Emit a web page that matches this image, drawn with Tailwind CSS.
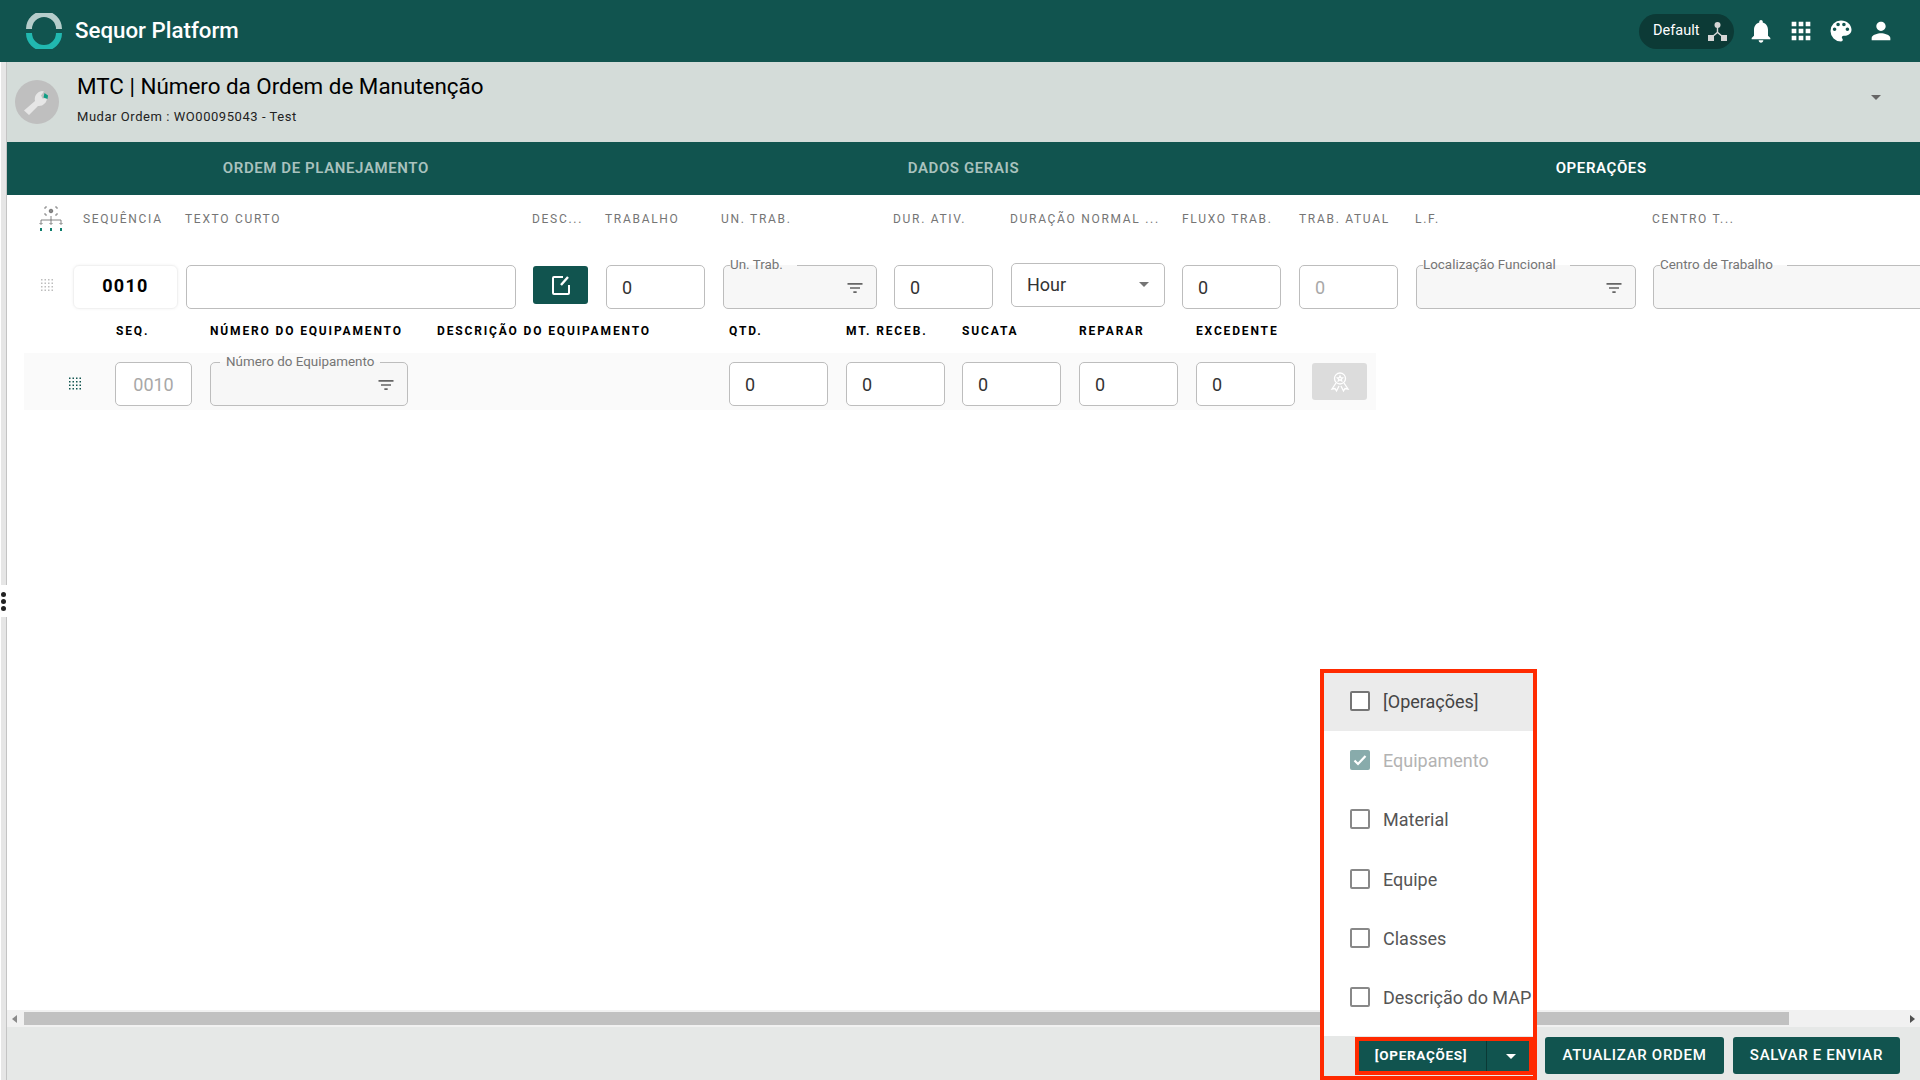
<!DOCTYPE html>
<html lang="pt">
<head>
  <meta charset="UTF-8" />
  <title>Sequor Platform</title>
  <script src="https://cdn.jsdelivr.net/npm/@tailwindcss/browser@4"></script>
</head>
<body class="bg-white text-[#333] font-[family-name:Roboto,sans-serif]">
<div class="relative w-[1920px] h-[1080px] overflow-hidden flex flex-col">

  <!-- Top bar -->
  <header class="h-[62px] shrink-0 bg-[#11544f] flex items-center text-white">
    <svg class="ml-[26px] w-[36px] h-[36px]" viewBox="0 0 36 36" fill="none" stroke-width="6">
      <path d="M3 16 A15 15 0 0 1 33 16" stroke="#b5cdcb" />
      <path d="M3 20 A15 15 0 0 0 33 20" stroke="#21b8b0" />
    </svg>
    <span class="ml-[13px] text-[22.300px] font-medium">Sequor Platform</span>
    <div class="ml-auto flex items-center w-[95px] h-[35px] rounded-full bg-[#0c3a36] pl-[14px]">
      <span class="text-[14.500px]">Default</span>
      <svg class="ml-[9px] w-[19px] h-[19px] text-[#d5d5d5]" viewBox="0 0 19 19" fill="currentColor">
        <circle cx="9.500" cy="3" r="3" />
        <path d="M8.800 5h1.400v5l3.500 3-1 1-3.200-2.700L6.300 14l-1-1 3.500-3z" />
        <rect x="0" y="13" width="6" height="6" />
        <rect x="13" y="13" width="6" height="6" />
      </svg>
    </div>
    <div class="ml-[13px] mr-[25px] flex items-center gap-[12px]">
      <svg class="w-[28px] h-[28px]" viewBox="0 0 24 24" fill="currentColor"><path d="M12 22c1.100 0 2-.9 2-2h-4c0 1.100.89 2 2 2zm6-6v-5c0-3.070-1.640-5.640-4.500-6.320V4c0-.83-.67-1.500-1.500-1.500s-1.500.67-1.500 1.500v.68C7.630 5.360 6 7.920 6 11v5l-2 2v1h16v-1l-2-2z"/></svg>
      <svg class="w-[28px] h-[28px]" viewBox="0 0 24 24" fill="currentColor"><path d="M4 8h4V4H4v4zm6 12h4v-4h-4v4zm-6 0h4v-4H4v4zm0-6h4v-4H4v4zm6 0h4v-4h-4v4zm6-10v4h4V4h-4zm-6 4h4V4h-4v4zm6 6h4v-4h-4v4zm0 6h4v-4h-4v4z"/></svg>
      <svg class="w-[28px] h-[28px]" viewBox="0 0 24 24" fill="currentColor"><path d="M12 3a9 9 0 0 0 0 18c.83 0 1.500-.67 1.500-1.500 0-.39-.15-.74-.39-1.010-.23-.26-.38-.61-.38-.99 0-.83.67-1.500 1.500-1.500H16c2.760 0 5-2.240 5-5 0-4.420-4.030-8-9-8zm-5.500 9c-.83 0-1.500-.67-1.500-1.500S5.670 9 6.500 9 8 9.670 8 10.500 7.330 12 6.500 12zm3-4C8.670 8 8 7.330 8 6.500S8.670 5 9.500 5s1.500.67 1.500 1.500S10.330 8 9.500 8zm5 0c-.83 0-1.500-.67-1.500-1.500S13.670 5 14.500 5s1.500.67 1.500 1.500S15.330 8 14.500 8zm3 4c-.83 0-1.500-.67-1.500-1.500S16.670 9 17.500 9s1.500.67 1.500 1.500-.67 1.500-1.500 1.500z"/></svg>
      <svg class="w-[28px] h-[28px]" viewBox="0 0 24 24" fill="currentColor"><path d="M12 12c2.210 0 4-1.790 4-4s-1.790-4-4-4-4 1.790-4 4 1.790 4 4 4zm0 2c-2.670 0-8 1.340-8 4v2h16v-2c0-2.660-5.330-4-8-4z"/></svg>
    </div>
  </header>

  <div class="flex-1 flex min-h-0">
    <!-- Left rail -->
    <div class="relative w-[7px] shrink-0 bg-[#e6e6e6] border-l border-l-white border-r border-r-[#c4c4c4]">
      <div class="absolute left-[-1px] top-[523px] w-[7px] h-[32px] bg-white flex flex-col items-center justify-center gap-[2px]">
        <span class="w-[5px] h-[5px] rounded-full bg-[#222]"></span>
        <span class="w-[5px] h-[5px] rounded-full bg-[#222]"></span>
        <span class="w-[5px] h-[5px] rounded-full bg-[#222]"></span>
      </div>
    </div>

    <div class="flex-1 min-w-0 flex flex-col">
      <!-- Order title -->
      <section class="h-[80px] shrink-0 bg-[#d4dcd9] flex items-center relative">
        <div class="ml-[8px] w-[44px] h-[44px] rounded-full bg-[#bfbfbf] flex items-center justify-center">
          <svg class="w-[32px] h-[32px]" viewBox="0 0 32 32">
            <path d="M3 24.500L14 15c-1-4.500 1.500-9 7-10l2 .5-3 4 1.500 3 4.500-.5c0 4.500-4 8.500-9 8L8 29z" fill="#e6e6e6" />
            <path d="M23.500 7l3.500 2.500-.5 3.500-4-1.500z" fill="#0f9d84" />
          </svg>
        </div>
        <div class="ml-[18px] -mt-[7px] flex flex-col">
          <h1 class="text-[22.400px] leading-[28px] text-black">MTC | Número da Ordem de Manutenção</h1>
          <p class="mt-[9px] text-[13px] leading-[16px] tracking-[0.55px] text-[#222]">Mudar Ordem : WO00095043 - Test</p>
        </div>
        <span class="absolute left-[1864px] top-[33px] border-x-[5px] border-x-transparent border-t-[5px] border-t-[#666]"></span>
      </section>

      <!-- Tabs -->
      <nav class="h-[53px] shrink-0 bg-[#11544f] grid grid-cols-3 items-center text-center text-[15px] font-semibold tracking-[0.6px] text-[#a9c2be]">
        <span>ORDEM DE PLANEJAMENTO</span>
        <span>DADOS GERAIS</span>
        <span class="text-white">OPERAÇÕES</span>
      </nav>

      <!-- Operations -->
      <main class="flex-1 min-h-0 overflow-hidden bg-white">
        <div class="w-[2000px] h-[48px] grid grid-cols-[66px_112px_347px_73px_116px_172px_117px_172px_117px_116px_237px_300px] items-center text-[12px] tracking-[1.700px] text-[#757575] whitespace-nowrap">
          <svg class="ml-[31px] w-[26px] h-[26px]" viewBox="0 0 26 26" fill="none" stroke="#666" stroke-width="0.8">
            <path d="M9 1H7v2M17 1h2v2M9 9H7V7M17 9h2V7" />
            <circle cx="13" cy="5" r="1.800" fill="#888" />
            <path d="M13 10v4M3 14h20M3 14v4M13 14v4M23 14v4M1.500 17L3 18.500 4.500 17M11.500 17l1.500 1.500 1.500-1.500M21.500 17l1.500 1.500 1.500-1.500" />
            <path d="M3 22v3M13 22v3M23 22v3" stroke="#11806f" stroke-width="2" />
          </svg>
          <span class="pl-[10px]">SEQUÊNCIA</span>
          <span>TEXTO CURTO</span>
          <span>DESC...</span>
          <span>TRABALHO</span>
          <span>UN. TRAB.</span>
          <span>DUR. ATIV.</span>
          <span>DURAÇÃO NORMAL ...</span>
          <span>FLUXO TRAB.</span>
          <span>TRAB. ATUAL</span>
          <span>L.F.</span>
          <span>CENTRO T...</span>
        </div>

        <div class="mt-[13px] w-[2000px] grid grid-cols-[66px_112px_347px_73px_116px_172px_117px_172px_117px_116px_237px_300px] items-end">
          <svg class="ml-[33px] mb-[15px] w-[16px] h-[16px]" viewBox="0 0 16 16" fill="#bdbdbd">
            <path d="M1 1h1.500v1.500H1zM4.500 1H6v1.500H4.500zM8 1h1.500v1.500H8zM11.500 1H13v1.500h-1.500zM1 4.500h1.500V6H1zM4.500 4.500H6V6H4.500zM8 4.500h1.500V6H8zM11.500 4.500H13V6h-1.500zM1 8h1.500v1.500H1zM4.500 8H6v1.500H4.500zM8 8h1.500v1.500H8zM11.500 8H13v1.500h-1.500zM1 11.500h1.500V13H1zM4.500 11.500H6V13H4.500zM8 11.500h1.500V13H8zM11.500 11.500H13V13h-1.500z" />
          </svg>
          <div class="w-[105px] h-[44px] pb-[4px] rounded-[6px] border border-[#f1f1f1] shadow-[0_0_3px_rgba(0,0,0,0.06)] flex items-center justify-center text-[18px] font-bold tracking-[1.300px] text-black">0010</div>
          <div class="ml-px w-[330px] h-[44px] rounded-[5px] border border-[#bdbdbd]"></div>
          <button class="ml-px mb-[5px] w-[55px] h-[38px] rounded-[3px] bg-[#11544f] flex items-center justify-center">
            <svg class="w-[24px] h-[24px]" viewBox="0 0 24 24" fill="none" stroke="white" stroke-width="2">
              <path d="M14 4H5a1 1 0 0 0-1 1v15a1 1 0 0 0 1 1h14a1 1 0 0 0 1-1v-8" />
              <path d="M12 12l7-8" stroke-width="2.400" />
            </svg>
          </button>
          <div class="ml-px w-[99px] h-[44px] rounded-[5px] border border-[#bdbdbd] flex items-center pl-[15px] text-[18px]">0</div>
          <fieldset class="ml-[2px] w-[154px] h-[53px] rounded-[5px] border border-[#bdbdbd] bg-[#f7f7f7] relative">
            <legend class="ml-[6px] pr-[14px] text-[13.400px] leading-[18px] text-[#757575]">Un. Trab.</legend>
            <svg class="absolute right-[11px] top-[4px] w-[20px] h-[20px] text-[#666]" viewBox="0 0 24 24" fill="currentColor"><path d="M10 18h4v-2h-4v2zM3 6v2h18V6H3zm3 7h12v-2H6v2z"/></svg>
          </fieldset>
          <div class="ml-px w-[99px] h-[44px] rounded-[5px] border border-[#bdbdbd] flex items-center pl-[15px] text-[18px]">0</div>
          <div class="ml-px mb-[2px] w-[154px] h-[44px] pb-[2px] rounded-[5px] border border-[#bdbdbd] flex items-center pl-[15px] text-[18px]">
            Hour
            <span class="ml-auto mr-[15px] border-x-[5px] border-x-transparent border-t-[5px] border-t-[#757575]"></span>
          </div>
          <div class="w-[99px] h-[44px] rounded-[5px] border border-[#bdbdbd] flex items-center pl-[15px] text-[18px]">0</div>
          <div class="w-[99px] h-[44px] rounded-[5px] border border-[#bdbdbd] flex items-center pl-[15px] text-[18px] text-[#a8a8a8]">0</div>
          <fieldset class="ml-px w-[220px] h-[53px] rounded-[5px] border border-[#bdbdbd] bg-[#f7f7f7] relative">
            <legend class="ml-[6px] pr-[14px] text-[13.400px] leading-[18px] text-[#757575]">Localização Funcional</legend>
            <svg class="absolute right-[11px] top-[4px] w-[20px] h-[20px] text-[#666]" viewBox="0 0 24 24" fill="currentColor"><path d="M10 18h4v-2h-4v2zM3 6v2h18V6H3zm3 7h12v-2H6v2z"/></svg>
          </fieldset>
          <fieldset class="ml-px w-[300px] h-[53px] rounded-[5px] border border-[#bdbdbd] bg-[#f7f7f7]">
            <legend class="ml-[6px] pr-[14px] text-[13.400px] leading-[18px] text-[#757575]">Centro de Trabalho</legend>
          </fieldset>
        </div>

        <div class="mt-[11px] ml-[17px] w-[1352px] h-[22px] grid grid-cols-[91px_95px_208px_311px_117px_116px_117px_117px_116px_64px] items-center text-[12px] font-bold tracking-[1.850px] text-black whitespace-nowrap">
          <span></span>
          <span class="pl-px">SEQ.</span>
          <span>NÚMERO DO EQUIPAMENTO</span>
          <span class="pl-[19px]">DESCRIÇÃO DO EQUIPAMENTO</span>
          <span>QTD.</span>
          <span>MT. RECEB.</span>
          <span>SUCATA</span>
          <span>REPARAR</span>
          <span>EXCEDENTE</span>
          <span></span>
        </div>

        <div class="mt-[11px] ml-[17px] w-[1352px] h-[57px] bg-[#fafafa] grid grid-cols-[91px_95px_208px_311px_117px_116px_117px_117px_116px_64px] items-center text-[18px]">
          <svg class="ml-[44px] w-[16px] h-[17px]" viewBox="0 0 16 16" fill="#11544f">
            <path d="M1 1h1.500v1.500H1zM4.500 1H6v1.500H4.500zM8 1h1.500v1.500H8zM11.500 1H13v1.500h-1.500zM1 4.500h1.500V6H1zM4.500 4.500H6V6H4.500zM8 4.500h1.500V6H8zM11.500 4.500H13V6h-1.500zM1 8h1.500v1.500H1zM4.500 8H6v1.500H4.500zM8 8h1.500v1.500H8zM11.500 8H13v1.500h-1.500zM1 11.500h1.500V13H1zM4.500 11.500H6V13H4.500zM8 11.500h1.500V13H8zM11.500 11.500H13V13h-1.500z" />
          </svg>
          <div class="w-[77px] h-[44px] rounded-[5px] border border-[#bdbdbd] bg-white flex items-center justify-center text-[#a8a8a8]">0010</div>
          <fieldset class="mb-[9px] w-[198px] h-[53px] rounded-[5px] border border-[#bdbdbd] bg-[#f7f7f7] relative">
            <legend class="ml-[9px] px-[6px] text-[13.400px] leading-[18px] text-[#757575]">Número do Equipamento</legend>
            <svg class="absolute right-[11px] top-[4px] w-[20px] h-[20px] text-[#666]" viewBox="0 0 24 24" fill="currentColor"><path d="M10 18h4v-2h-4v2zM3 6v2h18V6H3zm3 7h12v-2H6v2z"/></svg>
          </fieldset>
          <span></span>
          <div class="w-[99px] h-[44px] rounded-[5px] border border-[#bdbdbd] bg-white flex items-center pl-[15px]">0</div>
          <div class="w-[99px] h-[44px] rounded-[5px] border border-[#bdbdbd] bg-white flex items-center pl-[15px]">0</div>
          <div class="w-[99px] h-[44px] rounded-[5px] border border-[#bdbdbd] bg-white flex items-center pl-[15px]">0</div>
          <div class="w-[99px] h-[44px] rounded-[5px] border border-[#bdbdbd] bg-white flex items-center pl-[15px]">0</div>
          <div class="w-[99px] h-[44px] rounded-[5px] border border-[#bdbdbd] bg-white flex items-center pl-[15px]">0</div>
          <button class="mb-[5px] w-[55px] h-[37px] rounded-[3px] bg-[#dcdcdc] flex items-center justify-center">
            <svg class="w-[20px] h-[22px]" viewBox="0 0 20 22" fill="none" stroke="white" stroke-width="1.300">
              <circle cx="10" cy="7.500" r="5.500" />
              <path d="M10 5l.8 1.700 1.800.2-1.300 1.200.4 1.800-1.700-.9-1.700.9.4-1.800-1.300-1.200 1.800-.2z" />
              <path d="M6 12l-4 6 3-.5 1.500 2.500 2.500-5M14 12l4 6-3-.5-1.500 2.500-2.500-5" />
            </svg>
          </button>
        </div>
      </main>

      <!-- Horizontal scrollbar -->
      <div class="h-[17px] shrink-0 bg-[#f1f1f1] flex items-center">
        <span class="ml-[5px] border-y-[4px] border-y-transparent border-r-[5px] border-r-[#8a8a8a]"></span>
        <div class="ml-[7px] w-[1765px] h-[13px] bg-[#c1c1c1]"></div>
        <span class="ml-auto mr-[5px] border-y-[4px] border-y-transparent border-l-[5px] border-l-[#505050]"></span>
      </div>

      <!-- Footer actions -->
      <footer class="h-[53px] shrink-0 bg-[#e6e8e7] flex items-start justify-end pt-[10px] pr-[20px] text-white text-[15px] font-medium tracking-[0.7px]">
        <div class="w-[178px] h-[38px] border-4 border-[#ff2a00] bg-[#11544f] flex items-center text-[13.500px] font-bold">
          <span class="w-[128px] h-full pr-[3px] pb-[2px] flex items-center justify-center border-r border-[#0b3935]">[OPERAÇÕES]</span>
          <span class="ml-[19px] border-x-[5px] border-x-transparent border-t-[5px] border-t-white"></span>
        </div>
        <button class="ml-[12px] w-[179px] h-[37px] rounded-[3px] bg-[#11544f]">ATUALIZAR ORDEM</button>
        <button class="ml-[9px] w-[167px] h-[37px] rounded-[3px] bg-[#11544f]">SALVAR E ENVIAR</button>
      </footer>
    </div>
  </div>

  <!-- Dropdown menu, lying over the content -->
  <div class="absolute left-[1320px] top-[669px] w-[217px] h-[411px] border-4 border-[#ff2a00]">
    <ul class="bg-white h-[363px] text-[18px] text-[#555] overflow-hidden whitespace-nowrap">
      <li class="h-[58px] pb-[2px] bg-[#ebebeb] flex items-center pl-[26px] text-[#444]">
        <span class="w-[20px] h-[20px] rounded-[2px] border-[2.500px] border-[#757575] bg-white"></span>
        <span class="ml-[13px]">[Operações]</span>
      </li>
      <li class="h-[58px] flex items-center pl-[26px] text-[#b3b3b3]">
        <span class="w-[20px] h-[20px] rounded-[2px] bg-[#88abab] flex items-center justify-center">
          <svg class="w-[16px] h-[16px]" viewBox="0 0 16 16" fill="none" stroke="white" stroke-width="2.200"><path d="M2.500 8.500l3.500 3.500 7.500-8" /></svg>
        </span>
        <span class="ml-[13px]">Equipamento</span>
      </li>
      <li class="h-[60px] flex items-center pl-[26px]">
        <span class="w-[20px] h-[20px] rounded-[2px] border-[2.500px] border-[#888]"></span>
        <span class="ml-[13px]">Material</span>
      </li>
      <li class="h-[60px] flex items-center pl-[26px]">
        <span class="w-[20px] h-[20px] rounded-[2px] border-[2.500px] border-[#888]"></span>
        <span class="ml-[13px]">Equipe</span>
      </li>
      <li class="h-[58px] flex items-center pl-[26px]">
        <span class="w-[20px] h-[20px] rounded-[2px] border-[2.500px] border-[#888]"></span>
        <span class="ml-[13px]">Classes</span>
      </li>
      <li class="h-[60px] flex items-center pl-[26px]">
        <span class="w-[20px] h-[20px] rounded-[2px] border-[2.500px] border-[#888]"></span>
        <span class="ml-[13px]">Descrição do MAP</span>
      </li>
    </ul>
  </div>
</div>
</body>
</html>
